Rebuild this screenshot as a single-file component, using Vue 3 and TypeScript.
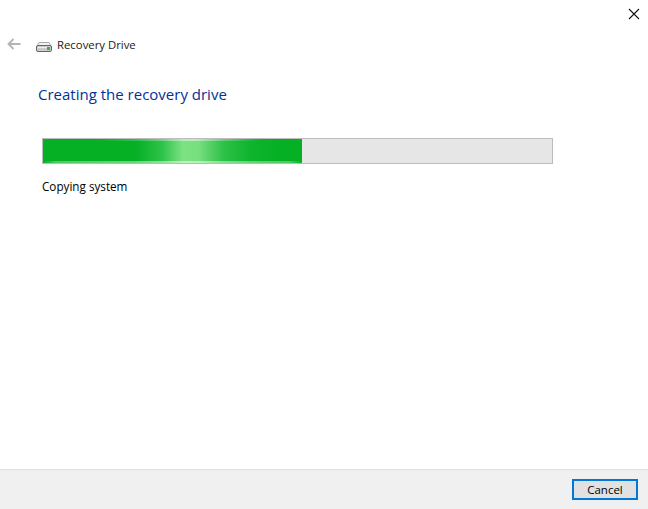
<template>
  <div class="wizard">
    <div class="title-bar">
      <button class="close-btn" type="button" aria-label="Close">
        <svg width="12" height="12" viewBox="0 0 12 12">
          <path d="M1 1 L11 11 M11 1 L1 11" stroke="#111" stroke-width="1.1" fill="none" />
        </svg>
      </button>
    </div>
    <div class="nav-row">
      <svg class="back" width="14" height="12" viewBox="0 0 14 12">
        <path d="M6.5 1 L1.5 6 L6.5 11 M1.5 6 H13.5" stroke="#b4b4b4" stroke-width="1.8" fill="none" />
      </svg>
      <svg class="drive" width="16" height="10" viewBox="0 0 16 10">
        <path d="M3 0.5 H13 L15.5 5 H0.5 Z" fill="#f2f2f2" stroke="#a8a8a8" />
        <rect x="0.5" y="3.5" width="15" height="6" rx="1.5" fill="#c9cdce" stroke="#666" />
        <rect x="2" y="5" width="12" height="1" fill="#eeeeee" />
        <rect x="11" y="5" width="3" height="3" fill="#3cb043" />
      </svg>
      <span class="app-name">{{ appName }}</span>
    </div>
    <main class="body">
      <h1>{{ heading }}</h1>
      <div class="progress">
        <div class="fill" :style="{ width: percent + '%' }"></div>
      </div>
      <p class="status">{{ status }}</p>
    </main>
    <footer class="footer">
      <button class="cancel" type="button">Cancel</button>
    </footer>
  </div>
</template>

<script setup lang="ts">
const appName = 'Recovery Drive'
const heading = 'Creating the recovery drive'
const status = 'Copying system'
const percent = 50.9
</script>

<style>
html, body {
  margin: 0;
  background: #fff;
}
</style>

<style scoped>
.wizard {
  width: 648px;
  height: 509px;
  display: flex;
  flex-direction: column;
  font-family: "Open Sans", "Noto Sans", sans-serif;
  color: #000;
  background: #fff;
  overflow: hidden;
}

.title-bar {
  height: 29px;
  display: flex;
  justify-content: flex-end;
}

.close-btn {
  width: 29px;
  height: 29px;
  padding: 0 0 1px;
  border: 0;
  background: none;
  display: flex;
  align-items: center;
  justify-content: center;
}

.nav-row {
  height: 30px;
  display: flex;
  align-items: center;
  padding-left: 7px;
}

.back {
  margin-right: 15px;
}

.drive {
  margin-right: 5px;
  margin-top: 5px;
}

.app-name {
  font-size: 11.35px;
  color: #1a1a1a;
}

.body {
  flex: 1;
  padding: 0 95px 0 42px;
}

h1 {
  margin: 24px 0 0 -4px;
  font-size: 15px;
  line-height: 22px;
  font-weight: 400;
  color: #003399;
}

.progress {
  margin-top: 33px;
  height: 24px;
  border: 1px solid #bcbcbc;
  background: #e6e6e6;
}

.fill {
  height: 100%;
  background:
    linear-gradient(to right, rgba(255, 255, 255, 0) 22%, rgba(255, 255, 255, 0.45) 58%, rgba(255, 255, 255, 0) 84%) top / 100% 2px no-repeat,
    linear-gradient(to right, rgba(255, 255, 255, 0) 0%, rgba(255, 255, 255, 0.3) 5%, rgba(255, 255, 255, 0.5) 56%, rgba(255, 255, 255, 0.3) 95%, rgba(255, 255, 255, 0) 100%) bottom / 100% 2px no-repeat,
    linear-gradient(to right, #06b025 0%, #06b025 36%, #2ec24a 46%, #7de283 54%, #77df7e 60%, #2cc048 70%, #0fb42d 80%, #06b025 90%, #06b025 100%);
}

.status {
  margin: 13px 0 0;
  font-size: 11.7px;
  line-height: 18px;
}

.footer {
  height: 40px;
  box-sizing: border-box;
  border-top: 1px solid #dfdfdf;
  background: #f0f0f0;
  display: flex;
  justify-content: flex-end;
  align-items: flex-start;
  padding: 9px 10px 0 0;
}

.cancel {
  width: 66px;
  height: 21px;
  padding: 0;
  box-sizing: border-box;
  border: 2px solid #0078d7;
  background: #e1e1e1;
  font-family: inherit;
  font-size: 11.5px;
  line-height: 15px;
  color: #000;
}
</style>
